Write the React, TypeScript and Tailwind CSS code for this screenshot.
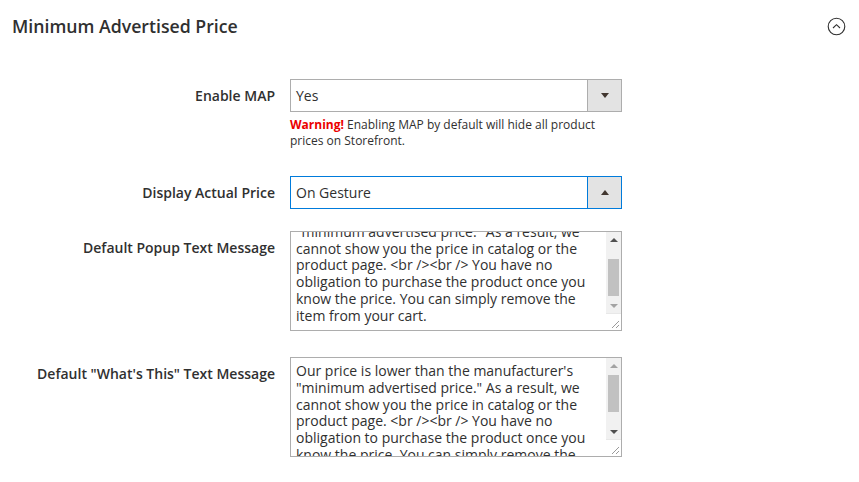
import { useEffect, useRef } from "react";

const MESSAGE =
  "Our price is lower than the manufacturer's \"minimum advertised price.\" As a result, we cannot show you the price in catalog or the product page. <br /><br /> You have no obligation to purchase the product once you know the price. You can simply remove the item from your cart.";

const SelectBox = ({ value, open }: { value: string; open?: boolean }) => (
  <div
    className={`flex h-[33px] w-[332px] border bg-white ${
      open ? "border-[#007bdb]" : "border-[#adadad]"
    }`}
  >
    <div className="flex flex-1 items-center pl-[5px] text-[14px] text-[#303030]">{value}</div>
    <div
      className={`flex w-[34px] items-center justify-center border-l bg-[#e3e3e3] ${
        open ? "border-[#007bdb]" : "border-[#adadad]"
      }`}
    >
      {open ? (
        <span className="h-0 w-0 border-x-[4px] border-b-[5px] border-x-transparent border-b-[#41362f]" />
      ) : (
        <span className="h-0 w-0 border-x-[4px] border-t-[5px] border-x-transparent border-t-[#41362f]" />
      )}
    </div>
  </div>
);

// native scrollbars are overlay in the browser, so the classic one is drawn here
const ScrollBar = ({ atBottom }: { atBottom?: boolean }) => (
  <div className="flex w-[15px] shrink-0 flex-col">
    <div className="flex h-[15px] items-center justify-center bg-[#f1f1f1]">
      <span
        className={`h-0 w-0 border-x-[4px] border-b-[4px] border-x-transparent ${
          atBottom ? "border-b-[#505050]" : "border-b-[#a3a3a3]"
        }`}
      />
    </div>
    <div className="h-[51px] bg-[#f1f1f1] px-[2px]">
      <div className={`h-[37px] bg-[#c1c1c1] ${atBottom ? "mt-[12px]" : "mt-[2px]"}`} />
    </div>
    <div className="flex h-[15px] items-center justify-center bg-[#f1f1f1]">
      <span
        className={`h-0 w-0 border-x-[4px] border-t-[4px] border-x-transparent ${
          atBottom ? "border-t-[#a3a3a3]" : "border-t-[#505050]"
        }`}
      />
    </div>
    <div className="flex flex-1 items-end justify-end border-t border-[#e8e8e8] bg-white">
      <svg width="9" height="9" viewBox="0 0 9 9" className="mb-[1px] mr-[1px]">
        <path d="M1 8L8 1M5 8L8 5" stroke="#9a9a9a" strokeWidth="1" />
      </svg>
    </div>
  </div>
);

const MessageArea = ({ scrolled }: { scrolled?: boolean }) => {
  const ref = useRef<HTMLTextAreaElement>(null);
  useEffect(() => {
    if (scrolled && ref.current) ref.current.scrollTop = 9999;
  }, [scrolled]);
  return (
    <div className="flex h-[100px] w-[332px] border border-[#adadad] bg-white">
      <textarea
        ref={ref}
        readOnly
        defaultValue={MESSAGE}
        className="block h-full min-w-0 flex-1 resize-none overflow-hidden bg-white px-[5px] py-[5px] text-[14px] leading-[1.2] text-[#303030] outline-none"
      />
      <ScrollBar atBottom={scrolled} />
    </div>
  );
};

const Label = ({ children, textarea }: { children: string; textarea?: boolean }) => (
  <div
    className={`w-[275px] shrink-0 text-right text-[14px] font-semibold text-[#303030] ${
      textarea ? "pt-[8px] leading-[18px]" : "flex h-[33px] items-center justify-end"
    }`}
  >
    {children}
  </div>
);

export default function App() {
  return (
    <div className="min-h-[482px] bg-white font-['Open_Sans',sans-serif] text-[#303030]">
      <div className="flex items-center justify-between pl-3 pr-[13px] pt-[14px]">
        <h2 className="text-[17.7px] font-semibold leading-[24px] text-[#303030]">Minimum Advertised Price</h2>
        <svg width="19" height="19" viewBox="0 0 19 19" fill="none">
          <circle cx="9.5" cy="9.5" r="8.3" stroke="#303030" strokeWidth="1.1" />
          <path d="M6 11l3.5-3.3L13 11" stroke="#303030" strokeWidth="1.1" />
        </svg>
      </div>

      <div className="mt-[41px]">
        <div className="flex gap-[15px]">
          <Label>Enable MAP</Label>
          <div>
            <SelectBox value="Yes" />
            <p className="mt-[5px] w-[332px] text-[12px] leading-[16px] text-[#303030]">
              <span className="font-bold text-[#eb0000]">Warning!</span> Enabling MAP by default will hide all
              product prices on Storefront.
            </p>
          </div>
        </div>

        <div className="mt-[27px] flex gap-[15px]">
          <Label>Display Actual Price</Label>
          <SelectBox value="On Gesture" open />
        </div>

        <div className="mt-[22px] flex gap-[15px]">
          <Label textarea>Default Popup Text Message</Label>
          <MessageArea scrolled />
        </div>

        <div className="mt-[26px] flex gap-[15px]">
          <Label textarea>Default "What's This" Text Message</Label>
          <MessageArea />
        </div>
      </div>
    </div>
  );
}
